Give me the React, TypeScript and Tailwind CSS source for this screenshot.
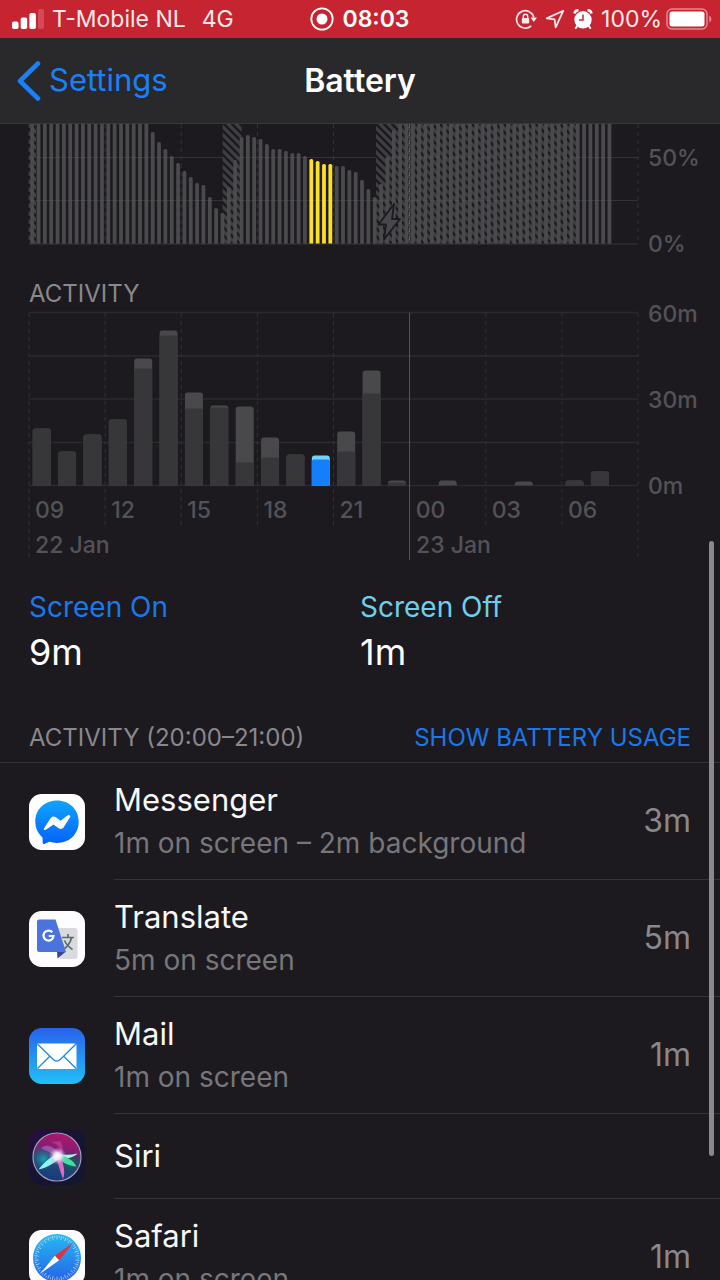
import React from "react";

const LEFT = 29;
const WIDTH = 609;
const HOUR = WIDTH / 24;
const QUARTER = WIDTH / 96;

/* Top edge of each quarter-hour battery bar; 0 means the bar runs past the visible area. */
const batteryTops: number[] = [
  ...Array(19).fill(0),
  8, 18, 25, 32, 39, 47, 53, 59, 61, 73, 84, 89, 63, 36, 13,
  11, 13, 15, 20, 25, 25, 27, 29, 29, 32, 35, 37, 40, 40, 42, 42, 46, 48, 56, 65, 73, 60, 33, 6,
  ...Array(34).fill(0),
];

const chargingSpans = [
  { from: 29, to: 36 },
  { from: 222.6, to: 241.6 },
  { from: 376, to: 576 },
];

type HourBar = { hour: number; total: number; on: number };

const activity: HourBar[] = [
  { hour: 0, total: 57, on: 57 },
  { hour: 1, total: 34, on: 34 },
  { hour: 2, total: 51, on: 51 },
  { hour: 3, total: 66, on: 66 },
  { hour: 4, total: 127, on: 117 },
  { hour: 5, total: 155, on: 150 },
  { hour: 6, total: 93, on: 77 },
  { hour: 7, total: 80, on: 78 },
  { hour: 8, total: 79, on: 23 },
  { hour: 9, total: 48, on: 28 },
  { hour: 10, total: 31, on: 31 },
  { hour: 11, total: 30, on: 26 },
  { hour: 12, total: 54, on: 34 },
  { hour: 13, total: 115, on: 92 },
  { hour: 14, total: 5, on: 3 },
  { hour: 16, total: 5, on: 0 },
  { hour: 19, total: 4, on: 0 },
  { hour: 21, total: 5, on: 5 },
  { hour: 22, total: 14, on: 14 },
];

const hourLabels = ["09", "12", "15", "18", "21", "00", "03", "06"];

function topRounded(x: number, top: number, w: number, bottom: number, r: number) {
  const k = Math.min(r, bottom - top);
  return `M${x} ${bottom}V${top + k}Q${x} ${top} ${x + k} ${top}H${x + w - k}Q${x + w} ${top} ${x + w} ${top + k}V${bottom}Z`;
}

function BatteryChart() {
  return (
    <svg viewBox="0 0 720 158" className="block w-full" role="img" aria-label="Battery level">
      <defs>
        <pattern id="hatch" width="8" height="8" patternUnits="userSpaceOnUse">
          <rect width="8" height="8" fill="#3f3e42" />
          <path d="M-2 -2L10 10M-2 6L2 10M6 -2L10 2" stroke="#1a191d" strokeWidth="2.5" />
        </pattern>
      </defs>
      {[33.5, 76.5].map((y) => (
        <path key={y} d={`M29 ${y}H638`} stroke="#2a292d" strokeWidth="1.2" />
      ))}
      {[0, 1, 2, 3, 4, 6, 7, 8].map((i) => (
        <path key={i} d={`M${LEFT + i * HOUR * 3} 0V120`} stroke="#333237" strokeDasharray="4 4" />
      ))}
      {chargingSpans.map((s) => (
        <rect key={s.from} x={s.from} y="0" width={s.to - s.from} height="120" fill="url(#hatch)" />
      ))}
      {batteryTops.map((top, i) => {
        const active = i >= 44 && i <= 47;
        const x = LEFT + QUARTER * (i + 0.5) - 1.9;
        return (
          <path
            key={i}
            d={top === 0 ? `M${x} 0H${x + 3.8}V120H${x}Z` : topRounded(x, top, 3.8, 120, 1.6)}
            fill={active ? "#fddf25" : "#4a494c"}
          />
        );
      })}
      <path d="M29 33.5H638M29 76.5H638" stroke="#ffffff" strokeOpacity="0.04" />
      <path d="M29 120H638" stroke="#353439" strokeWidth="1.2" />
      <path d="M409.6 0V120" stroke="#6a696d" strokeDasharray="4 4" />
      <path
        d="M394 80L378.500 100.500H386L384 115.500L400 95H392Z"
        fill="#48474b"
        stroke="#1c1a1f"
        strokeWidth="1.8"
        strokeLinejoin="round"
      />
      <g fill="#535257" fontSize="23" fontWeight="500">
        <text x="648" y="42">50%</text>
        <text x="648" y="128">0%</text>
      </g>
    </svg>
  );
}

function ActivityChart() {
  const base = 179.5;
  return (
    <svg viewBox="0 0 720 258" className="block w-full overflow-visible" role="img" aria-label="Activity by hour">
      {[6.5, 50, 93, 136.5, 179.5].map((y) => (
        <path key={y} d={`M29 ${y}H638`} stroke="#2b2a2e" strokeWidth="1.3" />
      ))}
      {[0, 1, 2, 3, 4, 6, 7, 8].map((i) => (
        <path
          key={i}
          d={`M${LEFT + i * HOUR * 3} 7V${i === 0 || i === 8 ? 254 : 222}`}
          stroke="#323136"
          strokeDasharray="4 4"
        />
      ))}
      <path d="M409.500 7V254" stroke="#545358" />
      {activity.map((bar) => {
        const x = LEFT + HOUR * (bar.hour + 0.5) - 9;
        const active = bar.hour === 11;
        return (
          <g key={bar.hour}>
            <path d={topRounded(x, base - bar.total, 18, base, 3)} fill={active ? "#70d3fa" : "#49484b"} />
            {bar.on > 0 && (
              <path d={topRounded(x, base - bar.on, 18, base, 2)} fill={active ? "#157efb" : "#373639"} />
            )}
          </g>
        );
      })}
      <g fill="#535257" fontSize="23" fontWeight="500">
        <text x="648" y="16">60m</text>
        <text x="648" y="102">30m</text>
        <text x="648" y="188">0m</text>
        {hourLabels.map((label, i) => (
          <text key={label} x={35 + i * HOUR * 3} y="212">{label}</text>
        ))}
        <text x="35" y="247">22 Jan</text>
        <text x="416" y="247">23 Jan</text>
      </g>
    </svg>
  );
}

function MessengerIcon() {
  return (
    <svg viewBox="0 0 56 56" className="size-14 shrink-0" aria-hidden="true">
      <defs>
        <linearGradient id="msg" x1="0" y1="0" x2="0" y2="1">
          <stop offset="0" stopColor="#0fa5fd" />
          <stop offset="1" stopColor="#0461fb" />
        </linearGradient>
      </defs>
      <rect width="56" height="56" rx="12.500" fill="#fff" />
      <path d="M28 6.500C15.500 6.500 6.300 15.500 6.300 27.500C6.300 34 9 39.500 13.300 43.200C14 44.500 13.300 47.300 13.800 49.300C14.100 50.200 15 50.100 15.800 49.800L20.500 47.800C22.800 48.500 25.400 48.900 28 48.900C40.500 48.900 49.700 39.800 49.700 27.700C49.700 15.500 40.500 6.500 28 6.500Z" fill="url(#msg)" />
      <path d="M15 34.500L21.700 24C22.800 22.300 25 21.900 26.600 23.100L31.500 26.800L38.800 21.300C40.200 20.300 42 21.800 41 23.300L34.700 33.300C33.600 35 31.300 35.400 29.700 34.200L24.500 30.400L17.200 35.600C15.600 36.600 14 36 15 34.500Z" fill="#fff" />
    </svg>
  );
}

function TranslateIcon() {
  return (
    <svg viewBox="0 0 56 56" className="size-14 shrink-0" aria-hidden="true">
      <rect width="56" height="56" rx="12.500" fill="#fdfdff" />
      <path d="M27 17H46Q48.500 17 48.500 19.500V45.500Q48.500 48 46 48H31Z" fill="#d9dade" />
      <path d="M28.500 47.500L37 40.500H28Z" fill="#3d3fa8" />
      <path d="M33 26.500H45M39 23V26.500M42.500 27C41.500 31.500 37.500 36.500 34.500 38.500M35.500 29.500C37 33 40.500 36.500 43.500 38.500" fill="none" stroke="#5c6d70" strokeWidth="1.700" />
      <path d="M10 8.500H26.500L37 41H10.500Q8 41 8 38.500V10.500Q8 8.500 10 8.500Z" fill="#4a74dc" />
      <path d="M23.300 21.300A5 5 0 1 0 24.500 25H19.800" fill="none" stroke="#fff" strokeWidth="2.200" />
    </svg>
  );
}

function MailIcon() {
  return (
    <svg viewBox="0 0 56 56" className="size-14 shrink-0" aria-hidden="true">
      <defs>
        <linearGradient id="mail" x1="0" y1="0" x2="0" y2="1">
          <stop offset="0" stopColor="#2862ec" />
          <stop offset="1" stopColor="#21c0f6" />
        </linearGradient>
      </defs>
      <rect width="56" height="56" rx="12.500" fill="url(#mail)" />
      <rect x="8" y="15.500" width="39.500" height="25.500" rx="1.500" fill="#fff" />
      <path d="M8.500 16L24 31.300C26.500 33.700 29 33.700 31.500 31.300L47 16M8.500 40.500L20.500 28.500M47 40.500L35 28.500" fill="none" stroke="#2587dd" strokeWidth="1.300" />
    </svg>
  );
}

function SiriIcon() {
  return (
    <svg viewBox="0 0 56 56" className="size-14 shrink-0" aria-hidden="true">
      <defs>
        <linearGradient id="siriBg" x1="0" y1="0" x2="1" y2="1">
          <stop offset="0" stopColor="#2c0b45" />
          <stop offset="0.500" stopColor="#151433" />
          <stop offset="1" stopColor="#12172f" />
        </linearGradient>
        <linearGradient id="siriOrb" x1="0.600" y1="0" x2="0.400" y2="1">
          <stop offset="0" stopColor="#b0156a" />
          <stop offset="0.300" stopColor="#8a1c74" />
          <stop offset="0.580" stopColor="#2a4a72" />
          <stop offset="1" stopColor="#143a80" />
        </linearGradient>
        <radialGradient id="siriCyan">
          <stop offset="0" stopColor="#16aab4" stopOpacity="0.900" />
          <stop offset="1" stopColor="#0d6f93" stopOpacity="0" />
        </radialGradient>
        <radialGradient id="siriGreen">
          <stop offset="0" stopColor="#0c7f66" stopOpacity="0.900" />
          <stop offset="1" stopColor="#13313c" stopOpacity="0" />
        </radialGradient>
        <radialGradient id="siriGlow">
          <stop offset="0" stopColor="#fff" />
          <stop offset="0.400" stopColor="#fbf2ff" stopOpacity="0.850" />
          <stop offset="1" stopColor="#d28ae8" stopOpacity="0" />
        </radialGradient>
      </defs>
      <rect width="56" height="56" rx="12.500" fill="url(#siriBg)" />
      <circle cx="28" cy="28" r="23.500" fill="url(#siriOrb)" />
      <circle cx="14.500" cy="30" r="12" fill="url(#siriCyan)" />
      <circle cx="41" cy="34" r="12" fill="url(#siriGreen)" />
      <path d="M12 19C19 14 27 18 30 28C23 25 18 22 12 19Z" fill="#c58ae0" fillOpacity="0.450" />
      <path d="M22 13C30 15 33 21 30 28C35 25 35 17 31 12Z" fill="#e765b9" fillOpacity="0.350" />
      <path d="M30 24C23 27 15 33 9.500 40.500C18 39 25 34 31 29Z" fill="#8ff5ee" />
      <path d="M28 25C35 26 42 26 48.500 24.500C44 29 36 30.500 29 30Z" fill="#b9efe0" />
      <path d="M29 26C37 27 44 31 47.500 37.500C40 37 33 33 28 30Z" fill="#43dfa0" />
      <path d="M27 27C29 34 31 42 34 50C37 43 34 33 31 27Z" fill="#df6bc0" />
      <circle cx="28.500" cy="27" r="9" fill="url(#siriGlow)" />
      <circle cx="28" cy="28" r="24" fill="none" stroke="#a7a0bd" strokeWidth="1.200" />
    </svg>
  );
}

function SafariIcon() {
  const ticks = Array.from({ length: 60 }, (_, i) => i * 6);
  return (
    <svg viewBox="0 0 56 56" className="size-14 shrink-0" aria-hidden="true">
      <defs>
        <linearGradient id="safari" x1="0" y1="0" x2="0" y2="1">
          <stop offset="0" stopColor="#29b9f4" />
          <stop offset="1" stopColor="#2362e5" />
        </linearGradient>
      </defs>
      <rect width="56" height="56" rx="12.500" fill="#fff" />
      <circle cx="28" cy="28" r="24" fill="url(#safari)" />
      {ticks.map((a) => (
        <path key={a} d={a % 12 === 0 ? "M28 5.500V9.500" : "M28 5.500V7.500"} transform={`rotate(${a} 28 28)`} stroke="#fff" strokeOpacity="0.750" strokeWidth="0.700" />
      ))}
      <path d="M44.500 12.500L25.800 25.800L30.200 30.200Z" fill="#e2303d" />
      <path d="M11.500 43.500L25.800 25.800L30.200 30.200Z" fill="#fff" />
    </svg>
  );
}

function StatusBar() {
  return (
    <div className="grid h-[38px] shrink-0 grid-cols-[1fr_auto_1fr] items-center bg-[#c62431] px-3 text-[23px] leading-8 text-white">
      <div className="flex items-center gap-2 whitespace-nowrap text-[#fdeaea]">
        <svg viewBox="0 0 32 20" className="h-5 w-8" role="img" aria-label="Signal strength">
          <rect x="0" y="12.500" width="6.500" height="7.500" rx="1.800" fill="#fff" />
          <rect x="8.700" y="8.500" width="6.500" height="11.500" rx="1.800" fill="#fff" />
          <rect x="17.400" y="4" width="6.500" height="16" rx="1.800" fill="#fff" />
          <rect x="26" y="0" width="6" height="20" rx="1.800" fill="#d34a56" />
        </svg>
        <span>T-Mobile NL</span>
        <span className="pl-2">4G</span>
      </div>
      <div className="flex items-center gap-2">
        <svg viewBox="0 0 24 24" className="size-6" role="img" aria-label="Recording">
          <circle cx="12" cy="12" r="10.700" fill="none" stroke="#fff" strokeWidth="1.800" />
          <circle cx="12" cy="12" r="5.500" fill="#fff" />
        </svg>
        <time className="font-semibold">08:03</time>
      </div>
      <div className="flex items-center justify-end text-[#fdeaea]">
        <svg viewBox="0 0 22 22" className="mr-2 h-[22px] w-[22px]" role="img" aria-label="Rotation lock">
          <path d="M16.200 17.800A8.700 8.700 0 1 1 18.800 9.500" fill="none" stroke="#fdeaea" strokeWidth="1.700" />
          <path d="M15.500 9.500H22L18.800 14Z" fill="#fdeaea" />
          <rect x="6.800" y="10" width="7.400" height="5.500" rx="1" fill="#fdeaea" />
          <path d="M8.300 10.500V8.500A2.200 2.200 0 0 1 12.700 8.500V10.500" fill="none" stroke="#fdeaea" strokeWidth="1.400" />
        </svg>
        <svg viewBox="0 0 20 20" className="mr-2 size-5" role="img" aria-label="Location">
          <path d="M18.300 1.700L1.700 9.400L9.600 10.400L10.700 18.300Z" fill="none" stroke="#fdeaea" strokeWidth="1.800" strokeLinejoin="round" />
        </svg>
        <svg viewBox="0 0 20 20" className="mr-2 size-5" role="img" aria-label="Alarm">
          <path d="M1.500 4.500A4 4 0 0 1 5.500 1.300M18.500 4.500A4 4 0 0 0 14.500 1.300" fill="none" stroke="#fff" strokeWidth="2.600" />
          <circle cx="10" cy="10.800" r="8.700" fill="#fff" />
          <path d="M4.500 16.500L2.800 19M15.500 16.500L17.200 19" stroke="#fff" strokeWidth="2" strokeLinecap="round" />
          <path d="M10 5.500V11H6" fill="none" stroke="#c62431" strokeWidth="1.500" />
        </svg>
        <span>100%</span>
        <svg viewBox="0 0 46 22" className="ml-1 -mr-1 h-[22px] w-[46px]" role="img" aria-label="Battery full">
          <rect x="1" y="1" width="40" height="20" rx="5" fill="none" stroke="#e9868d" strokeWidth="1.500" />
          <rect x="3.500" y="3.500" width="35" height="15" rx="2.500" fill="#fff" />
          <path d="M43.200 7.500Q45.500 8.500 45.500 11Q45.500 13.500 43.200 14.500Z" fill="#e9868d" />
        </svg>
      </div>
    </div>
  );
}

type App = { name: string; detail?: string; time?: string; icon: React.ReactNode };

const apps: App[] = [
  { name: "Messenger", detail: "1m on screen – 2m background", time: "3m", icon: <MessengerIcon /> },
  { name: "Translate", detail: "5m on screen", time: "5m", icon: <TranslateIcon /> },
  { name: "Mail", detail: "1m on screen", time: "1m", icon: <MailIcon /> },
  { name: "Siri", icon: <SiriIcon /> },
  { name: "Safari", detail: "1m on screen", time: "1m", icon: <SafariIcon /> },
];

function AppRow({ app }: { app: App }) {
  return (
    <li className="flex items-center gap-[29px] pl-[29px]">
      {app.icon}
      <div className={`flex min-w-0 flex-1 items-center justify-between border-b border-[#343338] pr-[29px] ${app.detail ? "py-[15px]" : "py-5"}`}>
        <div className="whitespace-nowrap">
          <h3 className="text-[31px] leading-[44px] text-[#f7f7f8]">{app.name}</h3>
          {app.detail && <p className="text-[28px] leading-[42px] text-[#77767a]">{app.detail}</p>}
        </div>
        {app.time && <span className="text-[32px] leading-10 text-[#89888d]">{app.time}</span>}
      </div>
    </li>
  );
}

export default function App() {
  return (
    <div className="relative flex h-screen flex-col overflow-hidden bg-[#1c1a1f] font-['Inter','Liberation_Sans',sans-serif]">
      <StatusBar />
      <header className="grid h-[86px] shrink-0 grid-cols-[1fr_auto_1fr] items-center border-b border-[#38373a] bg-[#29282b] px-[17px]">
        <a href="#settings" className="flex items-center gap-2 text-[31px] text-[#1b80f5]">
          <svg viewBox="0 0 24 40" className="h-10 w-6" aria-hidden="true">
            <path d="M21 2.500L3 20L21 37.500" fill="none" stroke="#1b80f5" strokeWidth="4.600" strokeLinecap="round" strokeLinejoin="round" />
          </svg>
          Settings
        </a>
        <h1 className="text-[32px] font-semibold text-white">Battery</h1>
      </header>
      <main className="min-h-0 flex-1 overflow-y-auto [scrollbar-width:none]">
        <BatteryChart />
        <h2 className="px-[29px] text-2xl leading-6 text-[#89888d]">ACTIVITY</h2>
        <ActivityChart />
        <dl className="grid grid-cols-2 px-[29px] pt-[25px]">
          <div>
            <dt className="text-[28px] leading-9 text-[#1b78ea]">Screen On</dt>
            <dd className="text-4xl leading-[54px] text-white">9m</dd>
          </div>
          <div>
            <dt className="text-[28px] leading-9 text-[#6fcfea]">Screen Off</dt>
            <dd className="text-4xl leading-[54px] text-white">1m</dd>
          </div>
        </dl>
        <div className="flex items-center justify-between border-b border-[#343338] px-[29px] pt-[43px] pb-2 text-2xl">
          <h2 className="text-[#89888d]">ACTIVITY (20:00–21:00)</h2>
          <button type="button" className="text-[#1b78ea]">SHOW BATTERY USAGE</button>
        </div>
        <ul>
          {apps.map((app) => (
            <AppRow key={app.name} app={app} />
          ))}
        </ul>
      </main>
      <div className="absolute top-[541px] right-[6px] h-[615px] w-[5px] rounded-full bg-[#89888d]" />
    </div>
  );
}
